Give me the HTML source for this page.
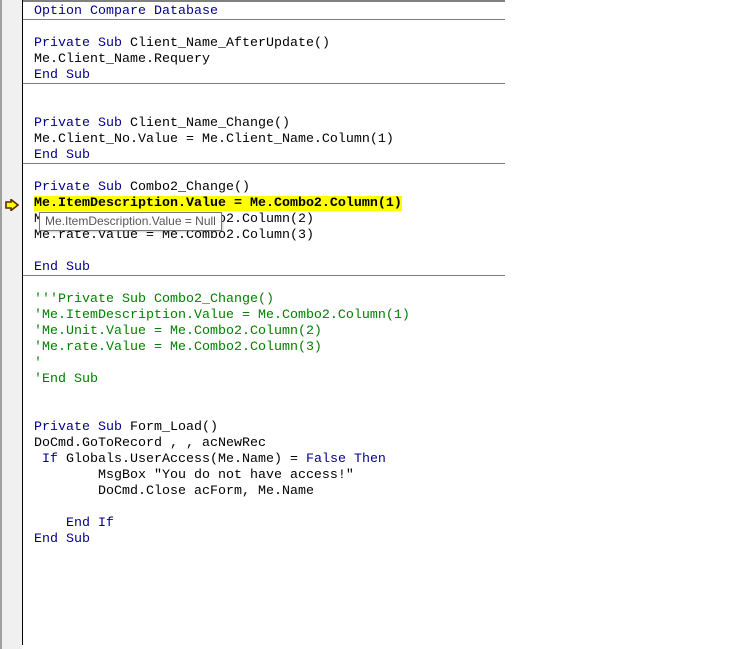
<!DOCTYPE html>
<html><head><style>
body{margin:0;width:746px;height:649px;background:#fff;position:relative;overflow:hidden}
.g{position:absolute;left:0;top:0;width:2px;height:649px;background:#a0a0a0}
.gut{position:absolute;left:2px;top:0;width:20px;height:649px;background:#f0f0f0}
.bl{position:absolute;left:22px;top:0;width:1px;height:645px;background:#000}
.hr{position:absolute;left:23px;width:482px;height:1px;background:#808080}
.code{position:absolute;left:34px;top:4px;font-family:"Liberation Mono",monospace;font-size:13.33px;line-height:16px;white-space:pre;color:#000}
.k{color:#00008b}.c{color:#008000}
.hl{background:#ffff00;font-weight:bold}
.tip{position:absolute;left:39px;top:212px;height:17px;padding:0 5px;border:1px solid #767676;background:#fff;font-family:"Liberation Sans",sans-serif;font-size:12px;line-height:17px;color:#575757;box-shadow:1px 1px 2px rgba(0,0,0,.2)}
.arr{position:absolute;left:5px;top:199px}
</style></head><body>
<div class="g"></div><div class="gut"></div><div class="bl"></div>
<div class="hr" style="top:0;height:2px"></div>
<div class="hr" style="top:19px"></div>
<div class="hr" style="top:83px"></div>
<div class="hr" style="top:163px"></div>
<div class="hr" style="top:275px"></div>
<div class="code"><span class="k">Option Compare Database</span>

<span class="k">Private Sub</span> Client_Name_AfterUpdate()
Me.Client_Name.Requery
<span class="k">End Sub</span>


<span class="k">Private Sub</span> Client_Name_Change()
Me.Client_No.Value = Me.Client_Name.Column(1)
<span class="k">End Sub</span>

<span class="k">Private Sub</span> Combo2_Change()
<span class="hl">Me.ItemDescription.Value = Me.Combo2.Column(1)</span>
Me.Unit.Value = Me.Combo2.Column(2)
Me.rate.Value = Me.Combo2.Column(3)

<span class="k">End Sub</span>

<span class="c">'''Private Sub Combo2_Change()</span>
<span class="c">'Me.ItemDescription.Value = Me.Combo2.Column(1)</span>
<span class="c">'Me.Unit.Value = Me.Combo2.Column(2)</span>
<span class="c">'Me.rate.Value = Me.Combo2.Column(3)</span>
<span class="c">'</span>
<span class="c">'End Sub</span>


<span class="k">Private Sub</span> Form_Load()
DoCmd.GoToRecord , , acNewRec
 <span class="k">If</span> Globals.UserAccess(Me.Name) = <span class="k">False Then</span>
        MsgBox "You do not have access!"
        DoCmd.Close acForm, Me.Name

    <span class="k">End If</span>
<span class="k">End Sub</span></div>
<svg class="arr" width="14" height="12" viewBox="0 0 14 12"><path d="M1 3H6V0.5L13 6L6 11.5V9H1Z" fill="#ffff00" stroke="#5a2a00" stroke-width="1.6"/></svg>
<div class="tip">Me.ItemDescription.Value = Null</div>
</body></html>
